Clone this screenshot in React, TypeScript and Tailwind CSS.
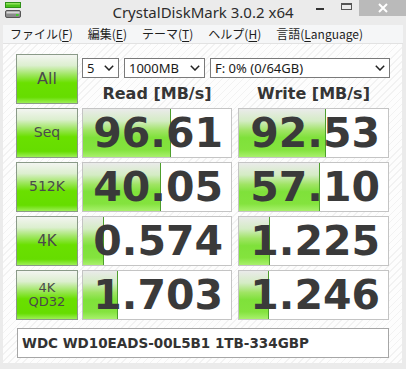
import React from "react";

const rows = [
  { label: ["Seq"], size: "text-[14px]", read: "96.61", readBar: 88, write: "92.53", writeBar: 87 },
  { label: ["512K"], size: "text-[14px]", read: "40.05", readBar: 78, write: "57.10", writeBar: 81 },
  { label: ["4K"], size: "text-[15px]", read: "0.574", readBar: 21, write: "1.225", writeBar: 31 },
  { label: ["4K", "QD32"], size: "text-[13px]", read: "1.703", readBar: 35, write: "1.246", writeBar: 30 },
];

function GreenButton({ children, className }: { children: React.ReactNode; className?: string }) {
  return (
    <div
      className={
        "w-[62px] h-[50px] shrink-0 border border-[#8a9a88] bg-[linear-gradient(to_bottom,#f3f5f1_0%,#dcefcf_22%,#9be65a_42%,#6ae000_58%,#66dd00_88%,#9cef55_100%)] flex flex-col items-center justify-center text-[#4a4a4a] font-['DejaVu_Sans',sans-serif] leading-[1.1] " +
        (className ?? "")
      }
    >
      {children}
    </div>
  );
}

function ResultBox({ value, bar, width }: { value: string; bar: number; width: string }) {
  return (
    <div className={"relative h-[50px] shrink-0 border border-[#c4c4c4] bg-white flex items-center justify-end pr-[8px] " + width}>
      <div
        className="absolute left-0 top-0 bottom-0 border-r border-[#4d9e2c] bg-[linear-gradient(to_bottom,#eaebea_0%,#d4ecc4_25%,#9fe463_45%,#7fe13a_60%,#84e33e_85%,#a8f06c_100%)]"
        style={{ width: bar }}
      />
      <span className="relative font-['DejaVu_Sans',sans-serif] font-bold text-[41px] leading-none text-[#3a3a3a]">
        {value}
      </span>
    </div>
  );
}

function Select({ text, width }: { text: string; width: string }) {
  return (
    <div className={"h-[20px] border border-[#7a7a7a] bg-white flex items-center justify-between pl-[4px] pr-[4px] " + width}>
      <span className="font-['Noto_Sans',sans-serif] text-[13px] leading-none text-[#1a1a1a]">{text}</span>
      <svg width="10" height="6" viewBox="0 0 10 6">
        <path d="M0.8 0.8 L5 5 L9.2 0.8" fill="none" stroke="#222" strokeWidth="1.5" />
      </svg>
    </div>
  );
}

function MenuItem({ pre, key_, post }: { pre: string; key_: string; post: string }) {
  return (
    <span>
      {pre}(<span className="underline underline-offset-2">{key_}</span>{post})
    </span>
  );
}

export default function App() {
  return (
    <div className="w-[406px] h-[369px] bg-[#ebebeb] flex flex-col overflow-hidden">
      {/* title bar */}
      <div className="h-[25px] grid grid-cols-[1fr_auto_1fr] items-start">
        <div className="pl-[5px] pt-[2px]">
          <svg width="16" height="16" viewBox="0 0 16 16">
            <rect x="0.5" y="0.5" width="15" height="5" fill="#4cc21c" stroke="#2f8f17" />
            <rect x="1" y="1" width="14" height="1.5" fill="#8fe25c" />
            <rect x="0.5" y="8.5" width="15" height="7" rx="1.5" fill="#8a8a8a" stroke="#555" />
            <rect x="1.5" y="9.5" width="13" height="2" fill="#d6d6d6" />
            <rect x="11" y="12" width="2.5" height="2" fill="#3ecf2a" />
          </svg>
        </div>
        <div className="pt-[3px] font-['Noto_Sans',sans-serif] text-[15px] leading-[18px] text-[#2b2b2b]">
          CrystalDiskMark 3.0.2 x64
        </div>
        <div className="flex justify-end items-start">
          <div className="w-[26px] h-[16px] flex items-start justify-center pt-[8px]">
            <div className="w-[8px] h-[2px] bg-[#333]" />
          </div>
          <div className="w-[26px] h-[16px] flex items-start justify-center pt-[3px]">
            <div className="w-[11px] h-[7px] border border-[#555] border-t-2" />
          </div>
          <div className="w-[47px] h-[16px] bg-[#bababa] flex items-center justify-center">
            <svg width="10" height="10" viewBox="0 0 10 10">
              <path d="M1 1 L9 9 M9 1 L1 9" stroke="#fff" strokeWidth="2" />
            </svg>
          </div>
        </div>
      </div>

      {/* menu bar */}
      <div className="ml-[3px] mr-[3px] h-[19px] bg-[#f5f6f7] border-b border-[#e2e2e2] flex items-center gap-[15px] pl-[7px] font-['Noto_Sans_CJK_JP',sans-serif] text-[12px] leading-none text-[#1e1e1e]">
        <MenuItem pre="ファイル" key_="F" post="" />
        <MenuItem pre="編集" key_="E" post="" />
        <MenuItem pre="テーマ" key_="T" post="" />
        <MenuItem pre="ヘルプ" key_="H" post="" />
        <span>
          言語(<span className="underline underline-offset-2">L</span>anguage)
        </span>
      </div>

      {/* client area */}
      <div className="ml-[3px] mr-[4px] h-[319px] bg-[repeating-linear-gradient(135deg,#fdfdfd_0px,#fdfdfd_4px,#f2f2f2_4px,#f2f2f2_5px)] pl-[13px] pt-[10px] flex flex-col gap-[4px]">
        {/* header row */}
        <div className="flex gap-[4px]">
          <GreenButton>
            <span className="text-[16px]">All</span>
          </GreenButton>
          <div className="flex flex-col">
            <div className="flex gap-[5px] mt-[4px]">
              <Select text="5" width="w-[37px]" />
              <Select text="1000MB" width="w-[81px]" />
              <Select text="F: 0% (0/64GB)" width="w-[180px]" />
            </div>
            <div className="flex gap-[6px] mt-[7px] font-['DejaVu_Sans',sans-serif] font-bold text-[16px] leading-[18px] text-[#353535]">
              <div className="w-[150px] text-center">Read [MB/s]</div>
              <div className="w-[151px] text-center">Write [MB/s]</div>
            </div>
          </div>
        </div>

        {rows.map((r) => (
          <div key={r.read} className="flex">
            <GreenButton className={r.size}>
              {r.label.map((l) => (
                <span key={l}>{l}</span>
              ))}
            </GreenButton>
            <div className="ml-[4px]">
              <ResultBox value={r.read} bar={r.readBar} width="w-[150px]" />
            </div>
            <div className="ml-[6px]">
              <ResultBox value={r.write} bar={r.writeBar} width="w-[151px]" />
            </div>
          </div>
        ))}

        <div className="mt-[4px] ml-[1px] w-[372px] h-[30px] border border-[#a6a6a6] bg-white flex items-center pl-[4px] font-['DejaVu_Sans',sans-serif] font-bold text-[13.5px] text-[#333]">
          WDC WD10EADS-00L5B1 1TB-334GBP
        </div>
      </div>
    </div>
  );
}
